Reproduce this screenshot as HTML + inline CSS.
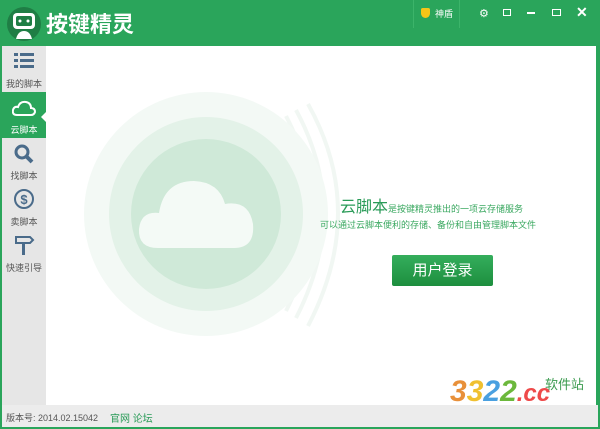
<!DOCTYPE html><html><head><meta charset="utf-8"><style>
*{margin:0;padding:0;box-sizing:border-box}
body{width:600px;height:429px;overflow:hidden;background:#2aa55b;font-family:"Liberation Sans","Noto Sans CJK SC",sans-serif;position:relative}
.abs{position:absolute}
.side{left:2px;top:46px;width:44px;height:359px;background:#e6e6e6}
.item{position:absolute;left:0;width:44px;height:46px;text-align:center;font-size:9px;color:#555}
.item span{position:absolute;left:0;right:0;top:31px}
.main{left:46px;top:46px;width:550px;height:359px;background:#fff}
.foot{left:2px;top:405px;width:596px;height:22px;background:#ececec;font-size:9px;color:#555}
</style></head><body>
<div class="abs" style="left:0;top:0;width:600px;height:46px;background:#2aa55b"></div>
<svg class="abs" style="left:6px;top:6px" width="36" height="36" viewBox="0 0 36 36"><circle cx="18" cy="18" r="17" fill="#1f7e45"/><rect x="7" y="7" width="22" height="16" rx="4" fill="#fff"/><rect x="10" y="10" width="16" height="10" rx="2" fill="#1f7e45"/><circle cx="14" cy="15" r="1.5" fill="#fff"/><circle cx="22" cy="15" r="1.5" fill="#fff"/><path d="M10 33 Q12 25 18 25 Q24 25 26 33Z" fill="#fff"/></svg>
<div class="abs" style="left:46px;top:7px;color:#fff;font-size:22px;font-weight:bold">按键精灵</div>
<div class="abs" style="left:413px;top:0;width:1px;height:28px;background:#3cb46a"></div>
<div class="abs" style="left:459px;top:0;width:1px;height:28px;background:#3cb46a"></div>
<div class="abs" style="left:421px;top:8px;width:9px;height:10px;background:#f5c518;border-radius:2px 2px 5px 5px"></div>
<div class="abs" style="left:435px;top:7px;color:#fff;font-size:9px">神盾</div>
<div class="abs" style="left:479px;top:7px;color:#fff;font-size:11px">⚙</div>
<div class="abs" style="left:503px;top:9px;width:8px;height:7px;border:1px solid #fff"></div>
<div class="abs" style="left:527px;top:12px;width:8px;height:2px;background:#fff"></div>
<div class="abs" style="left:552px;top:9px;width:9px;height:7px;border:1.5px solid #fff"></div>
<div class="abs" style="left:576px;top:4px;color:#fff;font-size:14px;font-weight:bold">✕</div>
<div class="abs side">
<div class="item" style="top:0"><svg style="margin-top:6px" width="22" height="18"><g fill="#4a6b8a"><rect x="1" y="1" width="4" height="3"/><rect x="7" y="1" width="14" height="3"/><rect x="1" y="7" width="4" height="3"/><rect x="7" y="7" width="14" height="3"/><rect x="1" y="13" width="4" height="3"/><rect x="7" y="13" width="14" height="3"/></g></svg><span>我的脚本</span></div>
<div class="item" style="top:46px;background:#2aa55b;color:#fff"><svg style="margin-top:8px" width="24" height="16"><path d="M5 15 Q0 15 1 10 Q2 6 6 7 Q8 1 14 2 Q19 3 19 8 Q23 8 23 12 Q22 15 19 15Z" fill="none" stroke="#fff" stroke-width="2"/></svg><span>云脚本</span></div>
<div class="abs" style="left:44px;top:66px;width:0;height:0;border:5px solid transparent;border-right-color:#fff;margin-left:-10px"></div>
<div class="item" style="top:92px"><svg style="margin-top:5px" width="22" height="22"><circle cx="9" cy="9" r="6" fill="none" stroke="#4a6b8a" stroke-width="3"/><path d="M13 13 L19 19" stroke="#4a6b8a" stroke-width="4"/></svg><span>找脚本</span></div>
<div class="item" style="top:138px"><svg style="margin-top:4px" width="22" height="22"><circle cx="11" cy="11" r="9" fill="none" stroke="#4a6b8a" stroke-width="2"/><text x="11" y="16" font-size="13" font-weight="bold" fill="#4a6b8a" text-anchor="middle" font-family="Liberation Sans">$</text></svg><span>卖脚本</span></div>
<div class="item" style="top:184px"><svg style="margin-top:4px" width="22" height="22"><path d="M3 3H17L20 6L17 9H3Z" fill="none" stroke="#4a6b8a" stroke-width="2"/><rect x="9" y="9" width="3" height="12" fill="#4a6b8a"/></svg><span>快速引导</span></div>
</div>
<div class="abs main"></div>
<svg class="abs" style="left:46px;top:46px" width="300" height="359">
<g fill="none" stroke="#f1f7f3" stroke-width="4"><path d="M240 70 Q290 165 240 265"/><path d="M250 64 Q305 165 250 272"/><path d="M262 58 Q322 165 262 280"/></g>
<circle cx="160" cy="168" r="122" fill="#f3f9f5"/><circle cx="160" cy="168" r="97" fill="#e3f2e8"/><circle cx="160" cy="168" r="75" fill="#cfe9d8"/>
<path d="M112 202 Q92 202 93 183 Q95 165 113 167 Q118 135 148 135 Q173 136 179 158 Q203 154 207 178 Q209 202 188 202Z" fill="#f4faf6"/>
</svg>
<div class="abs" style="left:340px;top:193px;color:#2a9b58;font-size:16px">云脚本<span style="font-size:9px;color:#3aa860">是按键精灵推出的一项云存储服务</span></div>
<div class="abs" style="left:320px;top:218px;color:#3aa860;font-size:9px">可以通过云脚本便利的存储、备份和自由管理脚本文件</div>
<div class="abs" style="left:392px;top:255px;width:101px;height:31px;background:linear-gradient(#34ae5c,#1d8e3e);color:#fff;font-size:15px;text-align:center;line-height:31px;border-radius:2px">用户登录</div>
<div class="abs foot"><span style="position:absolute;left:4px;top:6px">版本号: 2014.02.15042</span><span style="position:absolute;left:108px;top:5px;color:#2a9b58;font-size:10px">官网 论坛</span></div>
<div class="abs" style="left:450px;top:375px;font-size:30px;font-weight:bold;color:#e8903a;font-style:italic">3<span style="color:#f0c030">3</span><span style="color:#4aa0e0">2</span><span style="color:#6cb83c">2</span><span style="color:#ee4a4a;font-size:24px">.cc</span></div>
<div class="abs" style="left:545px;top:374px;font-size:13px;color:#3b9b4f">软件站</div>
</body></html>
